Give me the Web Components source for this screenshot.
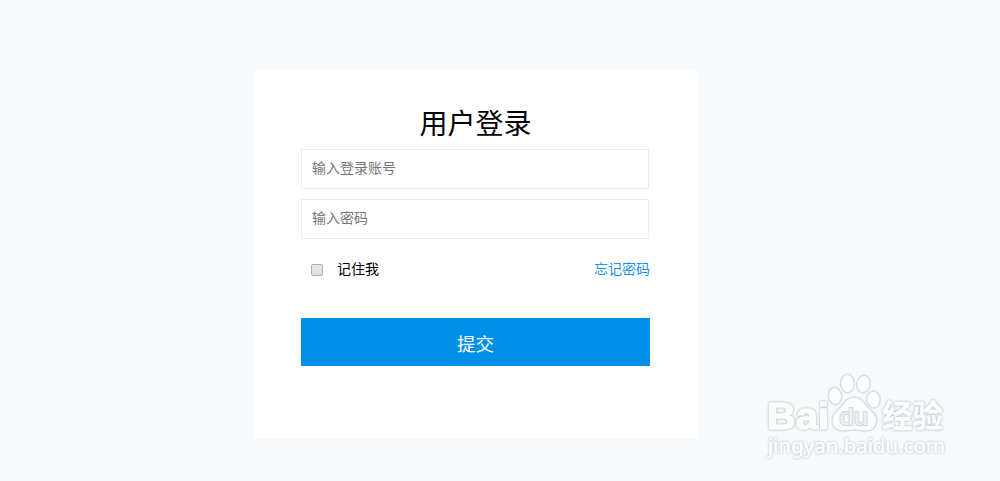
<!DOCTYPE html>
<html lang="zh-CN">
<head>
<meta charset="utf-8">
<title>用户登录</title>
<style>
html,body{margin:0;height:100%}
body{background:#f6fafd;overflow:hidden;font-family:"Noto Sans CJK SC",sans-serif;color:#000}
</style>
</head>
<body>
<login-page></login-page>
<script>
function define(name, html, setup) {
  const template = document.createElement('template');
  template.innerHTML = html;
  customElements.define(name, class extends HTMLElement {
    constructor() {
      super();
      this.attachShadow({mode: 'open'}).append(template.content.cloneNode(true));
    }
    connectedCallback() { if (setup) setup(this, this.shadowRoot); }
  });
}

define('login-field', `
<style>
:host{display:block;height:40px}
input{display:block;box-sizing:border-box;width:100%;height:100%;margin:0;padding:0 10px 4px;border:1px solid #ededed;background:#fff;border-radius:0;outline:0;font:14px "Noto Sans CJK SC",sans-serif;color:#333}
input::placeholder{color:#757575;opacity:1}
</style>
<input>`, (host, root) => {
  const input = root.querySelector('input');
  input.type = host.getAttribute('type') || 'text';
  input.placeholder = host.getAttribute('placeholder');
});

define('check-option', `
<style>
:host{display:flex;align-items:center}
input{appearance:none;box-sizing:border-box;width:12px;height:12px;margin:3px 14px 0 10px;border:1px solid #adadad;border-radius:2px;background:linear-gradient(#e9e9e9,#dcdcdc)}
label{display:flex;align-items:center}
</style>
<label><input type="checkbox"><slot></slot></label>`);

define('submit-button', `
<style>
:host{display:block;height:48px}
button{display:block;width:100%;height:100%;margin:0;padding:3px 0 0;border:0;background:#008fe8;color:#fff;font:18.5px/45px "Noto Sans CJK SC",sans-serif}
</style>
<button type="button"><slot></slot></button>`);

define('login-card', `
<style>
:host{display:flex;flex-direction:column;box-sizing:border-box;width:444px;height:369px;padding:32px 48px 0 47px;background:#fff}
h1{margin:0;height:47px;font-size:28px;line-height:41px;font-weight:400;text-align:center}
.fields{display:grid;gap:10px;margin-right:1px}
.options{display:flex;justify-content:space-between;align-items:center;height:20px;margin:19px 0 40px;font-size:14px;line-height:20px}
a{color:#1e8fee;text-decoration:none}
</style>
<h1>用户登录</h1>
<div class="fields">
<login-field placeholder="输入登录账号"></login-field>
<login-field type="password" placeholder="输入密码"></login-field>
</div>
<div class="options"><check-option>记住我</check-option><a href="#">忘记密码</a></div>
<submit-button>提交</submit-button>`);

define('site-mark', `
<style>
:host{display:block;width:190px;height:96px}
svg{display:block}
text{stroke-linejoin:round}
.glow{filter:drop-shadow(0 0 .8px #b9bcbf) drop-shadow(0 0 .5px #d9dbde)}
.soft{filter:drop-shadow(0 0 .8px #bec1c4) drop-shadow(0 0 .5px #e6e8ea)}
</style>
<svg width="190" height="96" viewBox="760 368 190 96" fill="#fcfefe">
<g class="glow" font-weight="700" stroke="#fcfefe">
<text x="767" y="428.500" font-family="Liberation Sans,sans-serif" font-size="37" stroke-width="1.400" textLength="62" lengthAdjust="spacingAndGlyphs">Bai</text>
<text x="882" y="426.500" font-family="Noto Sans CJK SC,sans-serif" font-size="31" stroke-width=".5" textLength="61" lengthAdjust="spacingAndGlyphs">经验</text>
</g>
<g stroke="#dcdfe2" stroke-width="1.600">
<ellipse cx="835" cy="396" rx="6.700" ry="8.700" transform="rotate(-8 835 396)"/>
<ellipse cx="847.500" cy="383.500" rx="6.900" ry="9.200"/>
<ellipse cx="863.500" cy="384" rx="6.700" ry="8.800" transform="rotate(10 863.500 384)"/>
<ellipse cx="873.500" cy="399.500" rx="6.700" ry="8.500" transform="rotate(-4 873.500 399.500)"/>
<path d="M854 397c-6 0-9 4-12 8-4 5-10 8-10 16 0 6 4 10 11 10 5 0 7-1 12-1 4 0 7 1 11 1 7 0 11-5 11-11 0-7-7-10-11-15-3-5-7-8-12-8z"/>
</g>
<text x="839.500" y="425" font-family="Liberation Sans,sans-serif" font-size="24" textLength="28.500" lengthAdjust="spacingAndGlyphs" fill="#eff1f3" stroke="#d5d8db" stroke-width="2.200" paint-order="stroke">du</text>
<text class="soft" x="768" y="453" font-family="Noto Sans,sans-serif" font-size="20" textLength="177" lengthAdjust="spacingAndGlyphs" stroke="#fcfefe" stroke-width=".6">jingyan.baidu.com</text>
</svg>`);

define('login-page', `
<style>
:host{display:block;position:relative;box-sizing:border-box;width:1000px;height:481px;padding:70px 0 0 254px;background:#f6fafd}
site-mark{position:absolute;left:760px;top:368px}
</style>
<login-card></login-card><site-mark></site-mark>`);
</script>
</body>
</html>
